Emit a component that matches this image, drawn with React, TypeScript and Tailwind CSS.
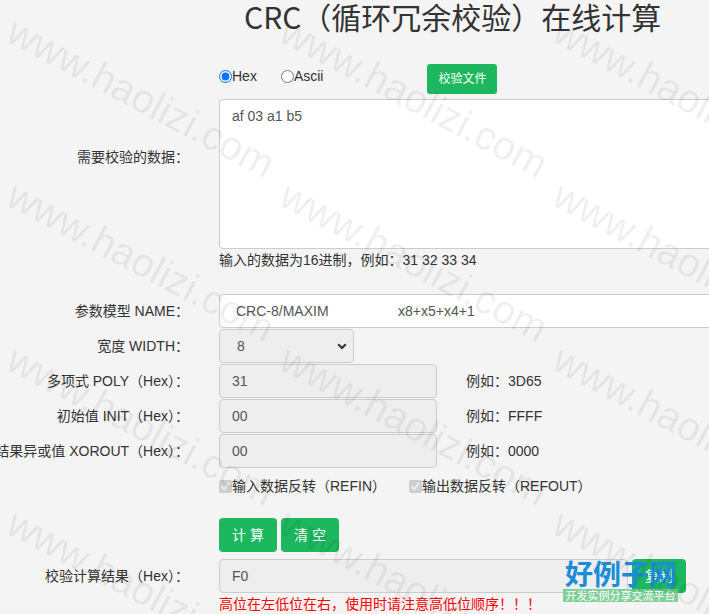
import React from "react";

const marks: { x: number; y: number }[] = [];
for (let r = 0; r < 4; r++) {
  for (let c = 0; c < 3; c++) {
    marks.push({ x: 20 + 273 * c, y: 10 + 164 * r });
  }
}

function Label({ children }: { children: React.ReactNode }) {
  return (
    <div className="w-[189px] shrink-0 flex justify-end items-center whitespace-nowrap text-[14px] leading-[20px] text-[#333]">
      {children}
    </div>
  );
}

function HexField({ value, example }: { value: string; example: string }) {
  return (
    <div className="flex items-center">
      <input
        readOnly
        value={value}
        className="shrink-0 h-[34px] w-[218px] border border-[#ccc] rounded-[4px] bg-[#eee] px-[12px] text-[14px] text-[#555] outline-none"
      />
      <span className="ml-[29px] text-[14px] text-[#333] whitespace-nowrap">{example}</span>
    </div>
  );
}

export default function App() {
  return (
    <div className="relative w-[709px] h-[614px] overflow-hidden bg-[#f4f4f4] text-[#333] font-['Liberation_Sans','Noto_Sans_CJK_SC',sans-serif]">
      <h1 className="pl-[244px] text-[30px] leading-[32px] font-normal text-[#333] whitespace-nowrap font-['Noto_Sans_CJK_SC',sans-serif]">
        CRC（循环冗余校验）在线计算
      </h1>

      {/* data input block */}
      <div className="mt-[32px] flex">
        <Label>需要校验的数据：</Label>
        <div className="ml-[30px] shrink-0 w-[560px]">
          <div className="flex items-start h-[30px]">
            <label className="mt-[2px] flex items-center h-[20px] text-[14px] text-[#333]">
              <input type="radio" name="fmt" defaultChecked className="m-0 w-[13px] h-[13px]" />
              <span>Hex</span>
            </label>
            <label className="ml-[24px] mt-[2px] flex items-center h-[20px] text-[14px] text-[#333]">
              <input type="radio" name="fmt" className="m-0 w-[13px] h-[13px]" />
              <span>Ascii</span>
            </label>
            <button className="ml-[104px] h-[30px] w-[70px] rounded-[3px] bg-[#1cb75e] text-white text-[12px]">
              校验文件
            </button>
          </div>
          <textarea
            readOnly
            defaultValue="af 03 a1 b5"
            className="mt-[5px] block w-[560px] h-[150px] border border-[#ccc] rounded-[4px] bg-white px-[12px] py-[6px] text-[14px] leading-[20px] text-[#555] resize-none outline-none"
          />
        </div>
      </div>
      <div className="mt-[1px] pl-[219px] text-[14px] leading-[20px] text-[#333] whitespace-nowrap">
        输入的数据为16进制，例如：31 32 33 34
      </div>

      {/* model parameters */}
      <div className="mt-[24px] flex h-[34px]">
        <Label>参数模型 NAME：</Label>
        <div className="ml-[30px] shrink-0 w-[560px] h-[34px] border border-[#ccc] rounded-[4px] bg-white pl-[16px] flex items-center text-[14px] text-[#555] whitespace-nowrap">
          <span className="w-[162px]">CRC-8/MAXIM</span>
          <span>x8+x5+x4+1</span>
        </div>
      </div>

      <div className="mt-[1px] flex h-[34px]">
        <Label>宽度 WIDTH：</Label>
        <div className="ml-[30px] shrink-0 relative w-[135px] h-[34px] border border-[#ccc] rounded-[4px] bg-[#eee] pl-[17px] flex items-center text-[14px] text-[#555]">
          <span>8</span>
          <svg className="absolute right-[6px] top-[13px]" width="10" height="7" viewBox="0 0 10 7">
            <path d="M1.2 1.2 L5 5 L8.8 1.2" fill="none" stroke="#333" strokeWidth="2" />
          </svg>
        </div>
      </div>

      <div className="mt-[1px] flex h-[34px]">
        <Label>多项式 POLY（Hex）：</Label>
        <div className="ml-[30px] shrink-0">
          <HexField value="31" example="例如：3D65" />
        </div>
      </div>
      <div className="mt-[1px] flex h-[34px]">
        <Label>初始值 INIT（Hex）：</Label>
        <div className="ml-[30px] shrink-0">
          <HexField value="00" example="例如：FFFF" />
        </div>
      </div>
      <div className="mt-[1px] flex h-[34px]">
        <Label>结果异或值 XOROUT（Hex）：</Label>
        <div className="ml-[30px] shrink-0">
          <HexField value="00" example="例如：0000" />
        </div>
      </div>

      {/* reflection flags */}
      <div className="mt-[8px] pl-[219px] flex items-center h-[20px] text-[14px] text-[#333] whitespace-nowrap">
        <label className="flex items-center">
          <input type="checkbox" disabled defaultChecked className="m-0 w-[13px] h-[13px]" />
          <span>输入数据反转（REFIN）</span>
        </label>
        <label className="ml-[23px] flex items-center">
          <input type="checkbox" disabled defaultChecked className="m-0 w-[13px] h-[13px]" />
          <span>输出数据反转（REFOUT）</span>
        </label>
      </div>

      <div className="mt-[22px] pl-[219px] flex gap-[4px]">
        <button className="h-[34px] w-[58px] rounded-[4px] bg-[#1cb75e] text-white text-[14px]">计 算</button>
        <button className="h-[34px] w-[58px] rounded-[4px] bg-[#1cb75e] text-white text-[14px]">清 空</button>
      </div>

      <div className="mt-[7px] flex h-[34px]">
        <Label>校验计算结果（Hex）：</Label>
        <div className="ml-[30px] shrink-0 flex gap-[4px]">
          <input
            readOnly
            value="F0"
            className="shrink-0 h-[34px] w-[409px] border border-[#ccc] rounded-[4px] bg-[#eee] px-[12px] text-[14px] text-[#555] outline-none"
          />
          <button className="shrink-0 h-[34px] w-[54px] rounded-[4px] bg-[#1cb75e] text-white text-[14px]">复制</button>
        </div>
      </div>
      <div className="mt-[1px] pl-[219px] text-[14px] leading-[20px] text-[#f00] whitespace-nowrap">
        高位在左低位在右，使用时请注意高低位顺序！！！
      </div>

      {/* site badge */}
      <div className="absolute left-[563px] top-[557px] pointer-events-none">
        <div className="pl-[2px] text-[28px] leading-[32px] font-bold text-[#1b8cd8] whitespace-nowrap font-['Noto_Sans_CJK_SC',sans-serif]">
          好例子网
        </div>
        <div className="w-[115px] h-[13px] bg-[#6cc98c]/85 text-white text-[11px] leading-[13px] text-center whitespace-nowrap font-['Noto_Sans_CJK_SC',sans-serif]">
          开发实例分享交流平台
        </div>
      </div>

      {/* repeated site watermark */}
      <div className="absolute inset-0 pointer-events-none">
        {marks.map((m, i) => (
          <span
            key={i}
            className="absolute origin-top-left rotate-[28deg] text-[40px] leading-none text-black/[0.07] whitespace-nowrap font-['Liberation_Sans',sans-serif]"
            style={{ left: m.x, top: m.y }}
          >
            www.haolizi.com
          </span>
        ))}
      </div>
    </div>
  );
}
